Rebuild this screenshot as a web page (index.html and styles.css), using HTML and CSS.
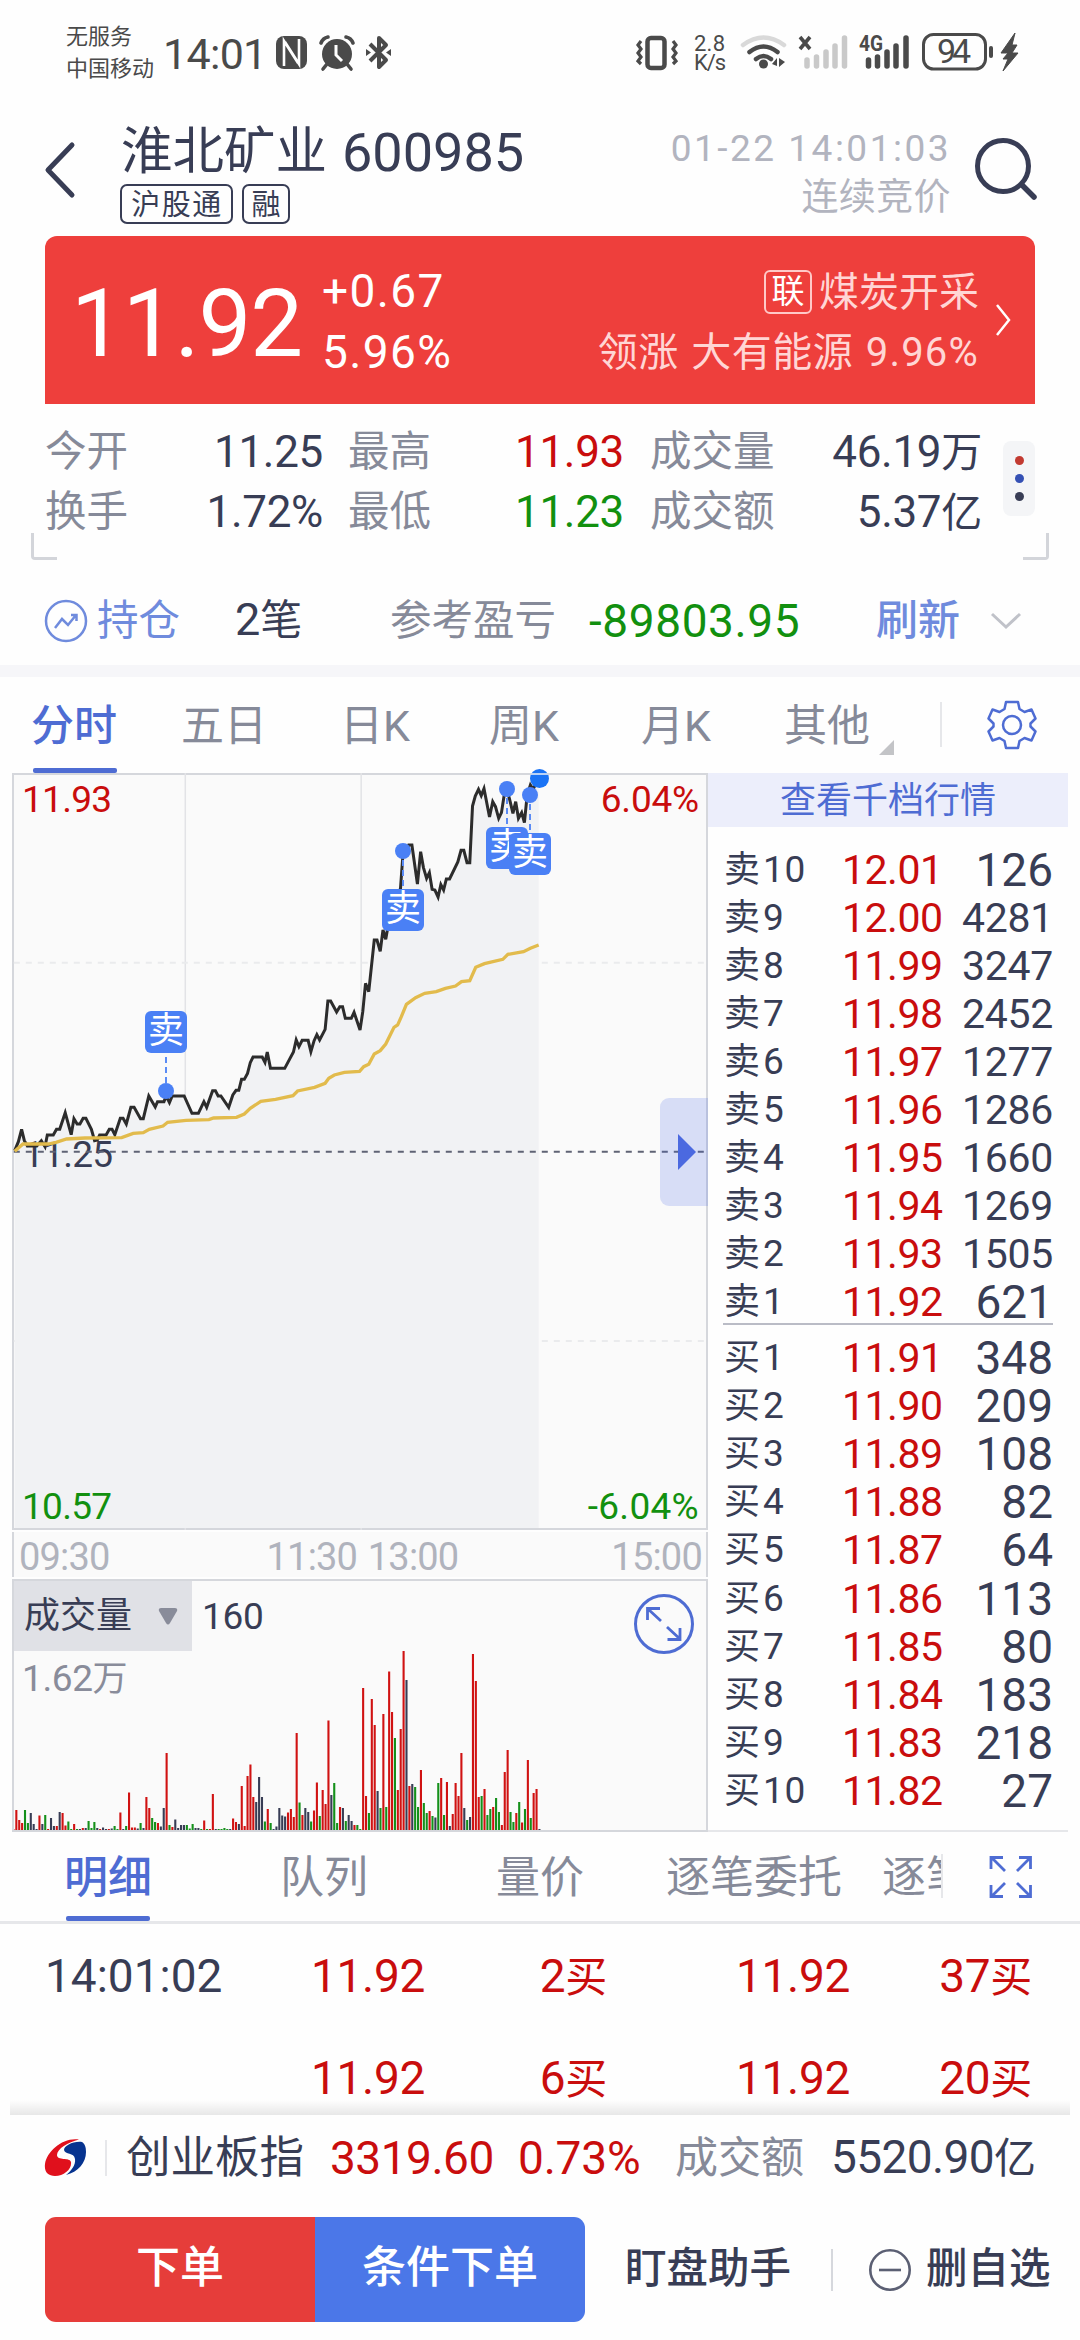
FILE: index.html
```html
<!DOCTYPE html>
<html lang="zh-CN">
<head>
<meta charset="utf-8">
<title>淮北矿业 600985</title>
<link rel="stylesheet" href="styles.css">
</head>
<body>
<div class="screen">

  <header class="status">
    <div class="carrier"><span>无服务</span><span>中国移动</span></div>
    <div class="clock">14:01</div>
    <svg class="status-left" width="120" height="40" viewBox="274 32 120 40">
      <rect x="276" y="36" width="31" height="33" rx="8" fill="#4a4a4a"/>
      <path d="M284 66V41l14 22M299 39v25l-14-22" fill="none" stroke="#fff" stroke-width="2.6"/>
      <circle cx="337" cy="54" r="15" fill="#4a4a4a"/>
      <path d="M327 64l-4 5M347 64l4 5M321 43q2-5 7-6M353 43q-2-5-7-6" fill="none" stroke="#4a4a4a" stroke-width="3.6" stroke-linecap="round"/>
      <path d="M336 45v10l6 6" fill="none" stroke="#fff" stroke-width="3"/>
      <path d="M370 44l16 16-7 7V38l7 7-16 16" fill="none" stroke="#4a4a4a" stroke-width="4" stroke-linejoin="round"/>
      <path d="M366 49l5 3.500-5 3.500zM391 49l-5 3.500 5 3.500z" fill="#4a4a4a"/>
    </svg>
    <svg class="status-right" width="388" height="44" viewBox="634 30 388 44">
      <g fill="none" stroke="#4a4a4a">
        <rect x="647.500" y="38" width="17" height="30" rx="3.500" stroke-width="4.500"/>
        <path d="M641 41l-3 4 3 4-3 4 3 4-3 4 3 3M673 41l3 4-3 4 3 4-3 4 3 4-3 3" stroke-width="3.200"/>
        <path d="M743 45q20.500-15 41 0" stroke="#d9d9d9" stroke-width="4.500" stroke-linecap="round"/>
        <path d="M749.500 52q14-11 28 0M756 59q7.500-6 15 0" stroke-width="4.500" stroke-linecap="round"/>
        <path d="M800 37l10 12M810 37l-10 12" stroke-width="3.600"/>
        <path d="M807 60v6M816.500 57v9" stroke="#c9c9c9" stroke-width="5.500" stroke-linecap="round"/>
        <path d="M826 52v14M835 46v20M844.500 38v28" stroke="#c9c9c9" stroke-width="5.500" stroke-linecap="round"/>
        <path d="M868.500 60v6M877.500 57v9M887 52v14M896 46v20M906 38v28" stroke-width="5.500" stroke-linecap="round"/>
        <rect x="923.500" y="34.500" width="62" height="34.500" rx="10" stroke-width="3"/>
        <path d="M991 48v8" stroke-width="4" stroke-linecap="round"/>
      </g>
      <circle cx="763.500" cy="64" r="4.500" fill="#4a4a4a"/>
      <path d="M777 58v8l-5-2zM779 58v9l6-5z" fill="#4a4a4a"/>
      <path d="M1015 33l-14 20h7l-5 6h5l-5 12 15-18h-6l5-8h-5z" fill="#4a4a4a" stroke="#4a4a4a" stroke-width="1" stroke-linejoin="round"/>
      <g class="status-text">
        <text x="694" y="51" textLength="31">2.8</text>
        <text x="694" y="70" textLength="32">K/s</text>
        <text x="859" y="51" class="net" textLength="24" lengthAdjust="spacingAndGlyphs">4G</text>
        <text x="937" y="63" class="battery" textLength="34">94</text>
      </g>
    </svg>
  </header>

  <div class="title-bar">
    <svg class="back" width="36" height="60" viewBox="0 0 36 60"><path d="M30 5L6 30l24 25" fill="none" stroke="#383d55" stroke-width="5" stroke-linecap="round" stroke-linejoin="round"/></svg>
    <div class="stock">
      <h1><span class="stock-name">淮北矿业</span><span class="stock-code">600985</span></h1>
      <div class="tags"><span class="tag wide">沪股通</span><span class="tag">融</span></div>
    </div>
    <div class="session">
      <span class="session-time">01-22 14:01:03</span>
      <span class="session-name">连续竞价</span>
    </div>
    <svg class="search" width="66" height="66" viewBox="0 0 66 66"><circle cx="31" cy="31" r="25.500" fill="none" stroke="#383d55" stroke-width="5"/><path d="M50 50l12 12" stroke="#383d55" stroke-width="5.500" stroke-linecap="round"/></svg>
  </div>

  <section class="quote">
    <strong class="last">11.92</strong>
    <div class="change"><span>+0.67</span><span>5.96%</span></div>
    <div class="sector">
      <div class="sector-name"><span class="sector-tag">联</span>煤炭开采</div>
      <div class="sector-lead">领涨 大有能源 <span class="sector-rate">9.96%</span></div>
    </div>
    <svg class="quote-more" width="18" height="34" viewBox="0 0 18 34"><path d="M2 2l12 15L2 32" fill="none" stroke="#fff" stroke-width="2.500"/></svg>
  </section>

  <section class="stats">
    <dl class="stat-grid">
      <dt>今开</dt><dd>11.25</dd><dt>最高</dt><dd class="up">11.93</dd><dt>成交量</dt><dd>46.19<i>万</i></dd>
      <dt>换手</dt><dd>1.72%</dd><dt>最低</dt><dd class="down">11.23</dd><dt>成交额</dt><dd>5.37<i>亿</i></dd>
    </dl>
    <div class="dots"><b class="dot-red"></b><b class="dot-blue"></b><b class="dot-dark"></b></div>
    <span class="corner corner-left"></span><span class="corner corner-right"></span>
  </section>

  <section class="position">
    <svg width="44" height="44" viewBox="0 0 44 44"><g fill="none" stroke="#6f8bdd" stroke-width="2.500"><circle cx="22" cy="22" r="20"/><path d="M11 29l7-9 6 6 8-10M27 16h5.500v6"/></g></svg>
    <span class="hold">持仓</span>
    <span class="lots">2<i>笔</i></span>
    <span class="pl-label">参考盈亏</span>
    <span class="pl">-89803.95</span>
    <span class="refresh">刷新</span>
    <svg class="fold" width="32" height="18" viewBox="0 0 32 18"><path d="M2 2l14 13L30 2" fill="none" stroke="#c0c2c9" stroke-width="3"/></svg>
  </section>

  <nav class="periods">
    <span class="period active">分时</span><span class="period">五日</span><span class="period">日K</span><span class="period">周K</span><span class="period">月K</span><span class="period other">其他</span>
    <span class="rule"></span>
    <svg class="gear" width="50" height="50" viewBox="0 0 50 50"><g fill="none" stroke="#4e6cd3" stroke-width="2.500" stroke-linejoin="round"><path d="M19 2h12l1.500 7 5 3 7-2.500 4 9-5 5v3l5 5-4 9-7-2.500-5 3-1.500 7H19l-1.500-7-5-3-7 2.500-4-9 5-5v-3l-5-5 4-9 7 2.500 5-3z"/><circle cx="25" cy="25" r="9"/></g></svg>
  </nav>

  <main class="market">
    <div class="charts">
      <div class="price-chart">
        <svg class="price-plot" width="696" height="757" viewBox="26.100 339 1515.700 2271" preserveAspectRatio="none">
          <g class="grid">
            <path d="M403.500 339V2610M786.500 339V2610"/>
            <path class="dashed" d="M30 908H1540M30 2043H1540"/>
          </g>
          <path id="price-area" class="price-area"/>
        </svg>
        <span class="axis-label mid">11.25</span>
        <svg class="price-plot" width="696" height="757" viewBox="26.100 339 1515.700 2271" preserveAspectRatio="none">
          <path class="base-line" d="M30 1475.500H1536"/>
          <polyline id="price-line" class="price-line" points="32,1472 40,1445 47,1408 53,1442 60,1458 80,1458 90,1442 98,1460 103,1425 116,1425 123,1408 130,1408 142,1358 155,1424 161,1376 168,1392 174,1392 181,1375 187,1375 199,1408 206,1442 212,1440 217,1425 231,1425 238,1408 244,1408 250,1424 262,1375 268,1375 275,1392 285,1342 292,1342 306,1376 312,1376 324,1308 338,1341 343,1325 357,1325 362,1308 369,1328 375,1308 401,1308 418,1360 432,1360 444,1325 450,1342 463,1292 469,1292 475,1308 481,1308 498,1342 507,1305 514,1291 520,1291 526,1258 532,1258 539,1240 545,1208 551,1191 571,1191 577,1207 582,1176 589,1225 620,1225 639,1176 645,1140 651,1160 658,1141 671,1141 677,1175 684,1142 690,1124 696,1140 708,1108 714,1023 720,1023 733,1056 740,1040 746,1040 752,1075 765,1075 771,1057 784,1110 790,1055 796,970 803,995 815,840 821,840 828,874 834,810 840,838 850,760 860,700 872,688 878,573 884,573 890,555 897,555 909,672 916,575 922,622 929,655 935,638 941,688 947,690 954,711 960,674 966,690 972,657 979,657 997,606 1004,571 1010,571 1017,608 1023,608 1029,438 1035,408 1042,388 1048,407 1054,386 1066,471 1073,425 1079,440 1086,475 1092,458 1098,405 1104,388 1111,425 1117,460 1123,425 1129,475 1136,458 1142,488 1148,405 1155,375 1161,388 1167,370 1173,355"/>
          <polyline class="average-line" points="32,1474 50,1452 105,1452 122,1447 145,1437 185,1434 265,1433 290,1420 312,1418 325,1408 355,1398 365,1387 405,1381 455,1379 465,1374 515,1372 532,1362 545,1345 568,1324 600,1318 638,1307 648,1293 685,1282 708,1270 716,1255 728,1245 750,1237 783,1234 792,1220 803,1213 815,1182 828,1172 840,1152 858,1102 866,1095 874,1070 885,1033 905,1013 925,1000 950,995 970,985 992,978 1005,965 1023,962 1036,922 1055,911 1095,898 1106,883 1140,875 1155,865 1173,855"/>
        </svg>
        <span class="axis-label top-left up">11.93</span>
        <span class="axis-label top-right up">6.04%</span>
        <span class="axis-label bottom-left down">10.57</span>
        <span class="axis-label bottom-right down">-6.04%</span>
        <span class="pin above" style="left:131px;top:236px">卖</span>
        <span class="pin" style="left:368px;top:114px">卖</span>
        <span class="pin" style="left:472px;top:52px">卖</span>
        <span class="pin" style="left:495px;top:58px">卖</span>
        <span class="now"></span>
        <span class="expand-tab"></span>
      </div>
      <div class="time-axis"><span>09:30</span><span class="noon">11:30 13:00</span><span>15:00</span></div>
      <div class="volume-chart">
        <svg id="volume-bars" class="volume-bars" width="692" height="249" viewBox="14 1581 692 249"></svg>
        <div class="volume-head">
          <div class="indicator">成交量<svg width="20" height="17" viewBox="0 0 20 17"><path d="M3 0h14q3 0 2 3l-7 12q-2 3-4 0L1 3Q0 0 3 0z" fill="#898c9a"/></svg></div>
          <span class="volume-now">160</span>
          <svg class="enlarge" width="62" height="62" viewBox="0 0 62 62"><g fill="none" stroke="#4e6cd3" stroke-width="3"><circle cx="31" cy="31" r="28.500"/><path d="M28 28L15 16M14.500 27V15.500H27M34 34l13 12M34.500 46.500H47V35" stroke-width="2.800"/></g></svg>
        </div>
        <div class="volume-max">1.62<i>万</i></div>
      </div>
    </div>

    <aside class="depth">
      <div class="depth-head">查看千档行情</div>
      <div class="book asks">
        <div class="row"><span class="side">卖<i>10</i></span><span class="price">12.01</span><span class="qty">126</span></div>
        <div class="row"><span class="side">卖<i>9</i></span><span class="price">12.00</span><span class="qty small">4281</span></div>
        <div class="row"><span class="side">卖<i>8</i></span><span class="price">11.99</span><span class="qty small">3247</span></div>
        <div class="row"><span class="side">卖<i>7</i></span><span class="price">11.98</span><span class="qty small">2452</span></div>
        <div class="row"><span class="side">卖<i>6</i></span><span class="price">11.97</span><span class="qty small">1277</span></div>
        <div class="row"><span class="side">卖<i>5</i></span><span class="price">11.96</span><span class="qty small">1286</span></div>
        <div class="row"><span class="side">卖<i>4</i></span><span class="price">11.95</span><span class="qty small">1660</span></div>
        <div class="row"><span class="side">卖<i>3</i></span><span class="price">11.94</span><span class="qty small">1269</span></div>
        <div class="row"><span class="side">卖<i>2</i></span><span class="price">11.93</span><span class="qty small">1505</span></div>
        <div class="row"><span class="side">卖<i>1</i></span><span class="price">11.92</span><span class="qty">621</span></div>
      </div>
      <div class="book bids">
        <div class="row"><span class="side">买<i>1</i></span><span class="price">11.91</span><span class="qty">348</span></div>
        <div class="row"><span class="side">买<i>2</i></span><span class="price">11.90</span><span class="qty">209</span></div>
        <div class="row"><span class="side">买<i>3</i></span><span class="price">11.89</span><span class="qty">108</span></div>
        <div class="row"><span class="side">买<i>4</i></span><span class="price">11.88</span><span class="qty">82</span></div>
        <div class="row"><span class="side">买<i>5</i></span><span class="price">11.87</span><span class="qty">64</span></div>
        <div class="row"><span class="side">买<i>6</i></span><span class="price">11.86</span><span class="qty">113</span></div>
        <div class="row"><span class="side">买<i>7</i></span><span class="price">11.85</span><span class="qty">80</span></div>
        <div class="row"><span class="side">买<i>8</i></span><span class="price">11.84</span><span class="qty">183</span></div>
        <div class="row"><span class="side">买<i>9</i></span><span class="price">11.83</span><span class="qty">218</span></div>
        <div class="row"><span class="side">买<i>10</i></span><span class="price">11.82</span><span class="qty">27</span></div>
      </div>
    </aside>
  </main>

  <nav class="detail-tabs">
    <div class="detail-list">
      <span class="detail active">明细</span><span class="detail">队列</span><span class="detail">量价</span><span class="detail wide">逐笔委托</span><span class="detail cut">逐笔</span>
    </div>
    <svg class="fullscreen" width="44" height="44" viewBox="0 0 44 44"><path d="M2 14V2.500h12M3 3l13 13M30 2.500h11.500V14M41 3L28 16M2 30v11.500h12M3 41l13-13M30 41.500h11.500V30M41 41L28 28" fill="none" stroke="#4e6cd3" stroke-width="2.800"/></svg>
  </nav>

  <section class="ticks">
    <div class="tick"><span class="tick-time">14:01:02</span><span>11.92</span><span>2<i>买</i></span><span>11.92</span><span>37<i>买</i></span></div>
    <div class="tick"><span class="tick-time"></span><span>11.92</span><span>6<i>买</i></span><span>11.92</span><span>20<i>买</i></span></div>
  </section>

  <footer class="bottom">
    <div class="index-row">
      <svg class="logo" width="44" height="40" viewBox="0 0 44 40">
        <path d="M35 1.500C19-1 3 13 1 26c-1 8 3 12 10 12 9 0 17-7 16-14-1-5-14-1-14-7C13 11 24 4 35 1.500z" fill="#e0101c"/>
        <path d="M38 4C29 3 20 8 20 12c1 5 10 2 11 9 1 6-4 12-9 16 12-3 20-12 20-23 0-5-1-8-4-10z" fill="#06338f"/>
      </svg>
      <span class="index-rule"></span>
      <span class="index-name">创业板指</span>
      <span class="index-value">3319.60</span>
      <span class="index-rate">0.73%</span>
      <span class="index-label">成交额</span>
      <span class="index-amount">5520.90<i>亿</i></span>
    </div>
    <div class="actions">
      <div class="trade"><button class="order">下单</button><button class="conditional">条件下单</button></div>
      <span class="assistant">盯盘助手</span>
      <span class="action-rule"></span>
      <svg class="minus" width="44" height="44" viewBox="0 0 44 44"><g fill="none" stroke="#5b5f73" stroke-width="2.600"><circle cx="22" cy="22" r="19.700"/><path d="M11 22h22"/></g></svg>
      <span class="remove">删自选</span>
    </div>
  </footer>
</div>
<script src="chart.js"></script>
</body>
</html>
```
FILE: styles.css
```css
* { box-sizing: border-box; margin: 0; padding: 0; }
body { background: #fefefe; }
i { font-style: normal; }
svg { display: block; flex: none; }
.screen {
  width: 1080px; height: 2340px; overflow: hidden; background: #fefefe; color: #383d55;
  font-family: Roboto, "Noto Sans CJK SC", sans-serif; white-space: nowrap;
  display: flex; flex-direction: column;
}
.screen > * { flex: none; }
.up { color: #c90d0d; }
.down { color: #12900f; }

/* status bar */
.status { height: 112px; padding: 20px 58px 0 66px; display: flex; color: #4a4a4a; }
.carrier { width: 97px; padding-top: 1px; display: flex; flex-direction: column; font-size: 22px; line-height: 32px; }
.clock { width: 111px; font-size: 43px; line-height: 68px; letter-spacing: -0.7px; }
.status-left { margin-top: 12px; }
.status-right { margin: 10px 0 0 auto; }
.status-text { font-size: 22px; fill: #4a4a4a; }
.status-text .net { font-weight: 700; }
.status-text .battery { font-size: 34px; }

/* title */
.title-bar { height: 124px; padding-left: 42px; display: flex; }
.back { margin-top: 28px; }
.stock { margin-left: 42px; width: 420px; }
.stock h1 { display: flex; height: 72px; line-height: 80px; font-weight: 400; }
.stock-name { width: 222px; padding-left: 1px; font-size: 51.5px; }
.stock-code { font-size: 54px; line-height: 82px; }
.tags { display: flex; gap: 9px; }
.tag { height: 40px; width: 48px; border: 2.5px solid #383d55; border-radius: 7px; font-size: 29px; line-height: 38px; text-align: center; }
.tag.wide { width: 113px; letter-spacing: 1.5px; padding-left: 1px; }
.session { width: 411px; display: flex; flex-direction: column; align-items: flex-end; color: #b2b4bf; font-size: 37px; }
.session-time { height: 60px; line-height: 73px; letter-spacing: 2.5px; }
.session-name { line-height: 51px; letter-spacing: .4px; }
.search { margin: 23px 0 0 21px; }

/* quote banner */
.quote { height: 168px; margin: 0 45px; padding-left: 26px; border-radius: 12px 12px 0 0; background: #ee3f3c; color: #fff; display: flex; }
.last { width: 251px; font-size: 94px; line-height: 176px; font-weight: 400; letter-spacing: -1px; }
.change { width: 179px; padding-top: 25px; display: flex; flex-direction: column; font-size: 46px; line-height: 61px; letter-spacing: 1.4px; }
.sector { width: 478px; padding-top: 26px; display: flex; flex-direction: column; align-items: flex-end; font-size: 40px; line-height: 61px; color: #ffd6d5; }
.sector-name { display: flex; align-items: center; gap: 7px; height: 60px; }
.sector-lead { letter-spacing: .5px; word-spacing: 2px; }
.sector-tag { width: 48px; height: 44px; border: 2px solid #ffc9c8; border-radius: 6px; color: #fff; font-size: 33px; line-height: 40px; text-align: center; }
.sector-rate { letter-spacing: 1.2px; }
.quote-more { margin: 67px 0 0 16px; }

/* key figures */
.stats { position: relative; height: 160px; padding: 18px 45px 0; display: flex; }
.stat-grid { display: grid; grid-template-columns: 142px 136px 25px 142px 134px 26px 142px 190px; grid-auto-rows: 60px; line-height: 60px; }
.stat-grid dt { font-size: 41.5px; color: #868a99; }
.stat-grid dd { font-size: 44px; text-align: right; letter-spacing: -.3px; }
.stat-grid i { font-size: 41px; }
.stat-grid dt:nth-of-type(3n+2) { grid-column: 4; }
.stat-grid dt:nth-of-type(3n) { grid-column: 7; }
.dots { width: 32px; height: 75px; margin: 19px 0 0 21px; border-radius: 8px; background: #f4f5f7; display: flex; flex-direction: column; align-items: center; justify-content: center; gap: 9px; }
.dots b { width: 9px; height: 9px; border-radius: 50%; }
.dot-red { background: #c23a31; }
.dot-blue { background: #3450b4; }
.dot-dark { background: #383d55; }
.corner { position: absolute; top: 129px; width: 26px; height: 27px; border-bottom: 3px solid #d3d5da; }
.corner-left { left: 31px; border-left: 3px solid #d3d5da; border-bottom-left-radius: 4px; }
.corner-right { right: 31px; border-right: 3px solid #d3d5da; border-bottom-right-radius: 4px; }

/* position */
.position { height: 113px; border-bottom: 12px solid #f6f6f9; padding: 12px 44px 0; display: flex; align-items: center; font-size: 41.5px; line-height: 80px; }
.hold { width: 140px; padding-left: 9px; color: #6f8bdd; }
.lots { width: 162px; padding-left: 7px; font-size: 45px; }
.lots i { font-size: 42px; }
.pl-label { width: 199px; color: #868a99; }
.pl { width: 287px; font-size: 46px; letter-spacing: .6px; color: #12900f; }
.refresh { width: 114px; color: #6f8bdd; font-weight: 500; font-size: 42px; }

/* period tabs */
.periods { height: 96px; padding-left: 31px; display: flex; font-size: 43px; line-height: 98px; color: #868a99; }
.period { position: relative; width: 150px; height: 96px; }
.period:nth-child(2) { width: 159px; }
.period:nth-child(3) { width: 149px; }
.period:nth-child(4) { width: 152px; }
.period:nth-child(5) { width: 143px; }
.period.other { width: 156px; }
.period.active { color: #4e6cd3; font-weight: 500; }
.period.active::after { content: ""; position: absolute; left: 2px; bottom: 0; width: 84px; height: 5px; border-radius: 2px; background: #4e6cd3; }
.period.other::after { content: ""; position: absolute; left: 95px; top: 63px; border-left: 15px solid transparent; border-bottom: 15px solid #c3c4c7; }
.rule { width: 2px; height: 45px; margin-top: 25px; background: #e6e7ea; }
.gear { margin: 23px 0 0 45px; }

/* charts */
.market { display: flex; height: 1059px; padding-left: 12px; }
.charts { width: 696px; }
.price-chart { position: relative; height: 757px; border: 2px solid #d5d7dc; background: #fafafa; }
.price-chart > * { position: absolute; }
.price-plot { left: -2px; top: -2px; }
.price-plot path, .price-plot polyline { fill: none; vector-effect: non-scaling-stroke; }
.grid path { stroke: #e2e3e6; stroke-width: 1.5px; }
.grid .dashed { stroke: #eaebed; stroke-width: 2px; stroke-dasharray: 6px 6px; }
.price-plot .price-area { fill: #f1f2f4; }
.price-plot .base-line { stroke: #5f6374; stroke-width: 2px; stroke-dasharray: 6px 6px; }
.price-plot .price-line { stroke: #2c2c2c; stroke-width: 3px; }
.price-plot .average-line { stroke: #e2bb4c; stroke-width: 3.3px; }
.axis-label { font-size: 37px; line-height: 40px; letter-spacing: -.7px; }
.top-left { left: 8px; top: 5px; }
.top-right { right: 7px; top: 5px; letter-spacing: -.2px; }
.mid { left: 9px; top: 360px; }
.bottom-left { left: 8px; bottom: 1px; }
.bottom-right { right: 7px; bottom: 1px; letter-spacing: .3px; }
.pin { width: 42px; height: 42px; border-radius: 6px; background: #4a80f5; color: #fff; font-size: 36px; line-height: 41px; text-align: center; }
.pin::before { content: ""; position: absolute; left: 13px; top: -46px; width: 16px; height: 16px; border-radius: 50%; background: #4a80f5; }
.pin::after { content: ""; position: absolute; left: 20px; top: -29px; height: 26px; border-left: 2px dashed #5a8bf5; }
.pin.above::before { top: 72px; }
.pin.above::after { top: 46px; }
.now { left: 516px; top: -6px; width: 19px; height: 19px; border-radius: 50%; background: linear-gradient(#1a73f5 4px, #b9d2f5 4px, #b9d2f5 6px, #1a73f5 6px); }
.expand-tab { right: -2px; top: 323px; width: 48px; height: 108px; border-radius: 9px 0 0 9px; background: rgba(75, 105, 230, .2); }
.expand-tab::after { content: ""; position: absolute; left: 18px; top: 36px; border: 18px solid transparent; border-left-color: #4b69e0; border-right-width: 0; }
.time-axis { height: 45px; margin: 2px 0; padding: 0 4px 0 5px; border: solid #d5d7dc; border-width: 0 2px; background: #fafafa; display: flex; justify-content: space-between; font-size: 38px; line-height: 51px; letter-spacing: -.8px; color: #b0b3bd; }
.noon { padding-left: 4px; word-spacing: 2px; }
.volume-chart { position: relative; height: 253px; border: 2px solid #d5d7dc; background: #fafafa; }
.volume-bars { position: absolute; left: 0; top: 0; }
.volume-head { display: flex; height: 70px; position: relative; }
.indicator { width: 178px; padding-left: 10px; background: #e0e1e6; font-size: 36px; line-height: 72px; display: flex; align-items: center; gap: 26px; }
.volume-now { width: 429px; padding-left: 10px; font-size: 37px; line-height: 72px; letter-spacing: -.3px; }
.enlarge { margin: 12px 0 0 12px; }
.volume-max { padding-left: 8px; font-size: 37px; line-height: 55px; letter-spacing: -.4px; color: #898c9a; }
.volume-max i { font-size: 35px; }

/* order book */
.depth { width: 360px; border-bottom: 2px solid #e6e7ea; }
.depth-head { height: 54px; background: #eceefb; color: #4e6cd3; font-size: 36px; line-height: 56px; text-align: center; }
.book { margin-left: 15px; width: 330px; display: flex; flex-direction: column; }
.asks { padding-top: 19px; height: 498px; border-bottom: 2px solid #babcc6; }
.bids { padding-top: 9px; }
.row { height: 48.1px; display: flex; align-items: center; line-height: 48px; }
.side { width: 119px; padding-left: 1px; font-size: 36px; }
.side i { margin-left: 3px; font-size: 37px; letter-spacing: .6px; }
.price { width: 111px; font-size: 41px; letter-spacing: -.5px; color: #c90d0d; }
.qty { flex: 1; font-size: 46px; text-align: right; }
.qty.small { font-size: 41px; letter-spacing: -.3px; }

/* detail tabs */
.detail-tabs { height: 92px; border-bottom: 3px solid #e6e7ea; display: flex; }
.detail-list { width: 943px; height: 89px; padding-left: 64px; overflow: hidden; display: flex; font-size: 44px; line-height: 92px; color: #868a99; position: relative; }
.detail-list::after { content: ""; position: absolute; right: 0; top: 22px; width: 2px; height: 44px; background: #e6e7ea; }
.detail { position: relative; width: 216px; height: 89px; flex: none; }
.detail:nth-child(3) { width: 170px; }
.detail.cut { width: 59px; overflow: hidden; }
.detail.active { color: #4e6cd3; font-weight: 500; }
.detail.active::after { content: ""; position: absolute; left: 2px; bottom: 0; width: 84px; height: 5px; border-radius: 2px; background: #4e6cd3; }
.fullscreen { margin: 23px 0 0 46px; }

/* time and sales */
.ticks { height: 191px; overflow: hidden; color: #c90d0d; }
.tick { height: 102px; padding-left: 45px; display: grid; grid-template-columns: 180px 200px 182px 243px 182px; text-align: right; font-size: 46px; line-height: 104px; letter-spacing: -.3px; }
.tick i { font-size: 42px; }
.tick-time { color: #383d55; text-align: left; letter-spacing: 0; }

/* bottom bar */
.bottom { position: relative; height: 225px; background: #fefefe; }
.bottom::before { content: ""; position: absolute; left: 10px; right: 10px; top: -15px; height: 15px; background: linear-gradient(rgba(0,0,0,0), rgba(0,0,0,.09)); }
.index-row { height: 84px; padding: 1px 0 0 44px; display: flex; align-items: center; font-size: 44.5px; line-height: 84px; }
.index-rule { width: 2px; height: 36px; margin: 0 19px 0 17px; background: #e6e7ea; }
.index-name { width: 204px; }
.index-value { width: 188px; font-size: 46px; letter-spacing: -.5px; color: #c90d0d; }
.index-rate { width: 157px; font-size: 46px; letter-spacing: -.2px; color: #c90d0d; }
.index-label { width: 156px; font-size: 43px; color: #868a99; }
.index-amount { font-size: 46px; letter-spacing: -.6px; }
.index-amount i { font-size: 42px; }
.actions { display: flex; align-items: center; height: 105px; margin: 18px 0 0 45px; font-size: 41.5px; line-height: 60px; font-weight: 500; }
.trade { width: 540px; height: 105px; border-radius: 11px; overflow: hidden; display: flex; }
.trade button { width: 270px; border: 0; padding-bottom: 4px; background: #e63d3a; color: #fff; font: inherit; font-size: 44px; }
.trade .conditional { background: #4b77e8; }
.assistant { width: 206px; margin-left: 40px; padding-bottom: 2px; }
.action-rule { width: 2px; height: 42px; background: #d6d8dd; }
.minus { margin-left: 35px; }
.remove { margin-left: 14px; padding-bottom: 2px; }
```
FILE: chart.js
```js
// Per-minute volume: colour code (r up, g down, d flat) followed by the bar height.
const volume = "r1 r20 r10 r7 g20 g7 d17 d6 d1 r14.5 d6 g15 r1 d12 d4 r4 d18 r17 r4.5 g8.5 g1 r6 g1 d1 r2 d2 g9 g2 g8 d2 r1 d2.5 d1 r1 d1.5 g4 g1 r17.5 d1 g4 r37.5 r2.5 r2.5 d1.5 g7 d2 r33 r22 g12 g8 r7 d3.5 d22 r77 g5 r3 d10.5 d2 d5 d5 g5 g1.5 g6 d2 d2 g1 r9.5 g1 r1 r36 d1 g1 g1 g2 g1 d1 r11.5 r8 d6 r44 r4 r54 r65.5 r33 d28 d53 d33 g8.5 r21 g7 d1 d3.5 d22 d14.5 d13.5 r17.5 r21 r13 r97 g27.5 r15 d22 d18 g8.5 r19.5 r47.5 g14 r40 r26 r109.5 d35 g47 g7 r23 d22 g9 d15 d9 r5 g5 g1 r142 r34 g17 r131 r105 d39 g22 r116 g23 r158.5 r118 g92 r40 r101 r179 d150 r44 d46 g43 g23 r60 g27 g17 r19 g14 d12.5 g47 r52 g15 r48 d4 r16 r47 r34 r77 d22 g10 d13 r176 r149 r33 g34 r41 g15 g21 r23 g32 g18 r5 r58 r80 g18 g8 r17 g28 r7.5 g21 r70 g12 r37 r41 d1".split(" ");

const colours = { r: "#d01212", g: "#14901a", d: "#383d55" };
const paths = { r: "", g: "", d: "" };
volume.forEach((bar, minute) => {
  const x = 13.45 + minute * 2.89;
  paths[bar[0]] += `M${x.toFixed(2)} 1830v-${bar.slice(1)}`;
});

const svg = document.getElementById("volume-bars");
for (const key in paths) {
  const path = document.createElementNS("http://www.w3.org/2000/svg", "path");
  path.setAttribute("d", paths[key]);
  path.setAttribute("stroke", colours[key]);
  path.setAttribute("stroke-width", "2.1");
  svg.append(path);
}

// The shaded area runs from the price line down to the chart floor.
const points = document.getElementById("price-line").getAttribute("points");
document.getElementById("price-area").setAttribute("d", `M32 2604L${points}V2604Z`);
```
